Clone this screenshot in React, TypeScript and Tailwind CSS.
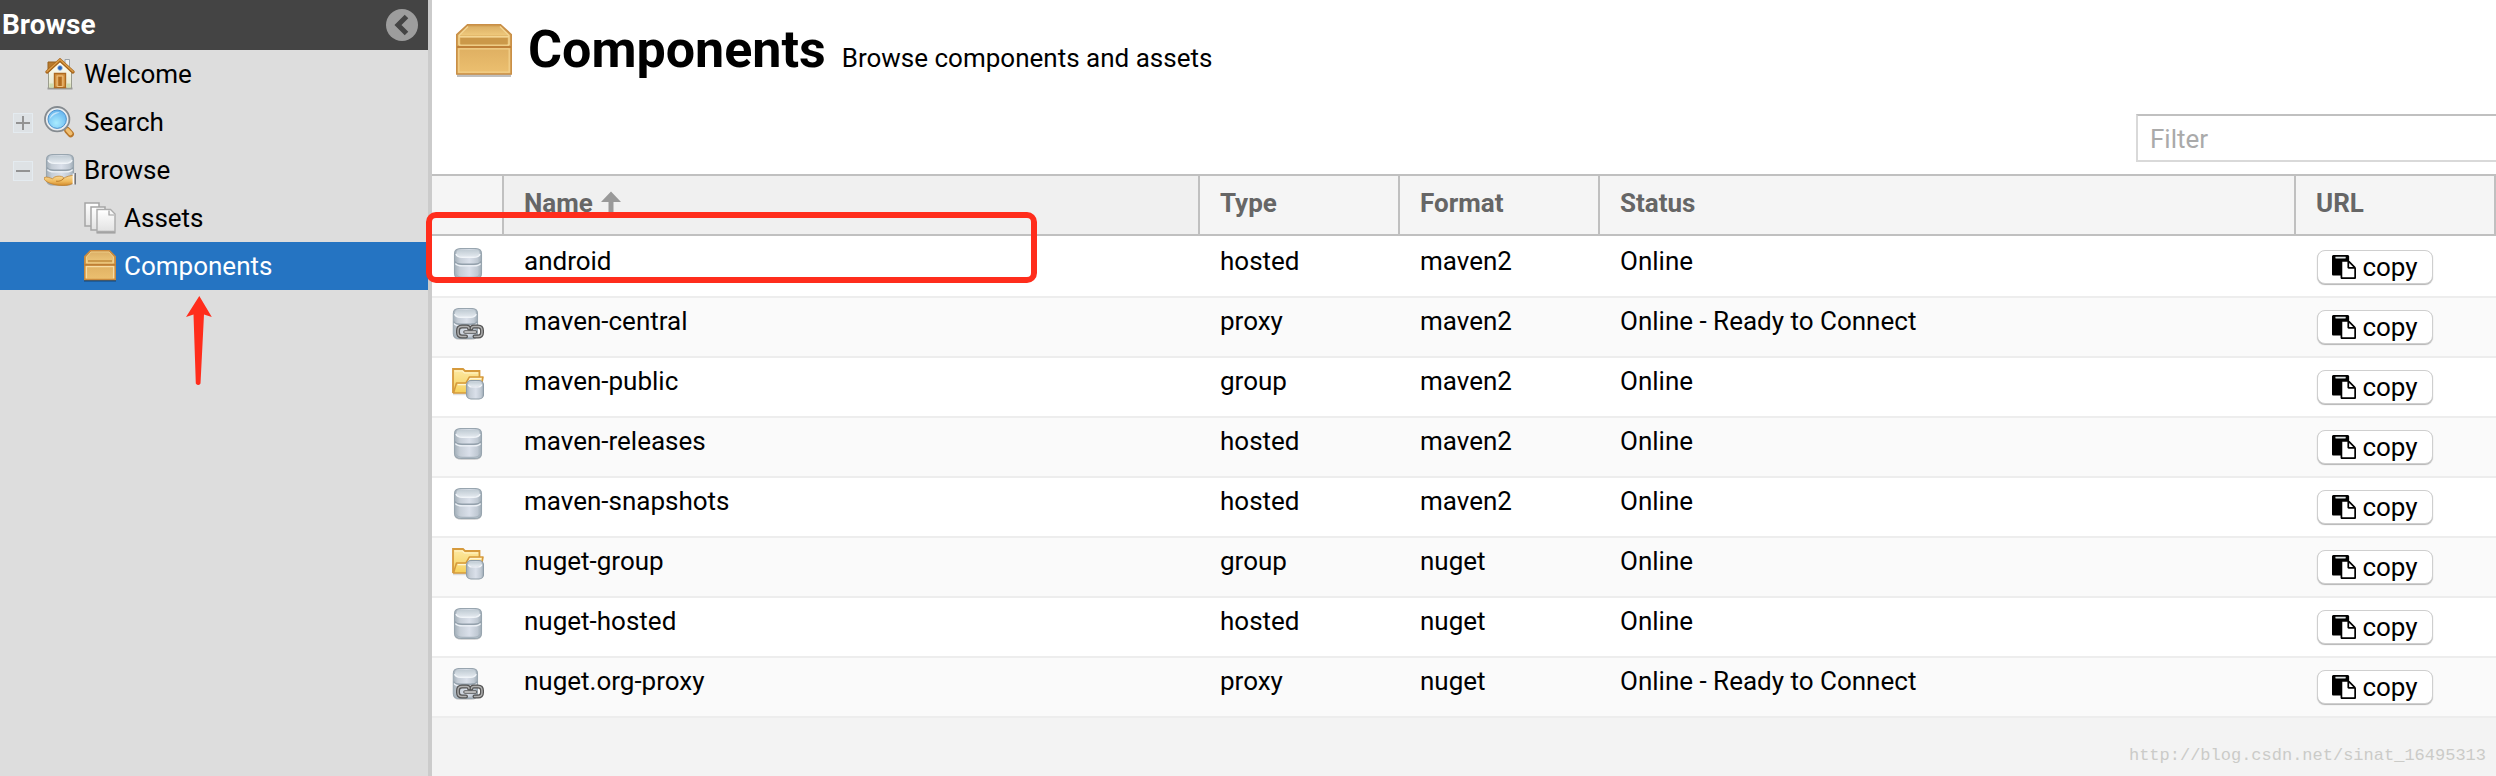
import { ReactNode } from "react";

type RepoType = "hosted" | "proxy" | "group";

interface Repository {
    name: string;
    type: RepoType;
    format: string;
    status: string;
}

const repositories: Repository[] = [
    { name: "android", type: "hosted", format: "maven2", status: "Online" },
    { name: "maven-central", type: "proxy", format: "maven2", status: "Online - Ready to Connect" },
    { name: "maven-public", type: "group", format: "maven2", status: "Online" },
    { name: "maven-releases", type: "hosted", format: "maven2", status: "Online" },
    { name: "maven-snapshots", type: "hosted", format: "maven2", status: "Online" },
    { name: "nuget-group", type: "group", format: "nuget", status: "Online" },
    { name: "nuget-hosted", type: "hosted", format: "nuget", status: "Online" },
    { name: "nuget.org-proxy", type: "proxy", format: "nuget", status: "Online - Ready to Connect" },
];

// Gradients shared by all the icons below
function IconDefs() {
    return (
        <svg className="absolute w-0 h-0" aria-hidden="true">
            <defs>
                <linearGradient id="steel" x1="0" x2="1" y1="0" y2="0">
                    <stop offset="0" stopColor="#a3afb9" />
                    <stop offset="0.2" stopColor="#c6ced7" />
                    <stop offset="0.55" stopColor="#dae0ea" />
                    <stop offset="0.85" stopColor="#c0c9d3" />
                    <stop offset="1" stopColor="#9facb6" />
                </linearGradient>
                <linearGradient id="steelTop" x1="0" x2="0" y1="0" y2="1">
                    <stop offset="0" stopColor="#c0cbd3" />
                    <stop offset="1" stopColor="#e2e8ee" />
                </linearGradient>
                <linearGradient id="lid" x1="0" x2="0" y1="0" y2="1">
                    <stop offset="0" stopColor="#dcb066" />
                    <stop offset="1" stopColor="#efc97c" />
                </linearGradient>
                <linearGradient id="carton" x1="0" x2="0" y1="0" y2="1">
                    <stop offset="0" stopColor="#d3a155" />
                    <stop offset="1" stopColor="#ecc070" />
                </linearGradient>
                <linearGradient id="folder" x1="0" x2="0" y1="0" y2="1">
                    <stop offset="0" stopColor="#fde9a4" />
                    <stop offset="1" stopColor="#f5cf57" />
                </linearGradient>
                <linearGradient id="hand" x1="0" x2="0" y1="0" y2="1">
                    <stop offset="0" stopColor="#f9dc9c" />
                    <stop offset="0.6" stopColor="#efb95c" />
                    <stop offset="1" stopColor="#d18a2c" />
                </linearGradient>
                <linearGradient id="wall" x1="0" x2="0" y1="0" y2="1">
                    <stop offset="0" stopColor="#fffef4" />
                    <stop offset="1" stopColor="#e4e6cd" />
                </linearGradient>
                <linearGradient id="paper" x1="0" x2="0" y1="0" y2="1">
                    <stop offset="0" stopColor="#ffffff" />
                    <stop offset="1" stopColor="#e2e2e2" />
                </linearGradient>
                <radialGradient id="lens" cx="0.45" cy="0.7" r="0.7">
                    <stop offset="0" stopColor="#a9ecff" />
                    <stop offset="1" stopColor="#66b4ee" />
                </radialGradient>
            </defs>
        </svg>
    );
}

function Icon({ children }: { children: ReactNode }) {
    return (
        <svg viewBox="0 0 32 32" className="block w-8 h-8 shrink-0" aria-hidden="true">
            {children}
        </svg>
    );
}

function Cylinder() {
    return (
        <>
            <path d="M2.500 25v2q0 4.800 7 4.800h13q7 0 7-4.800v-2z" fill="#000" opacity="0.2" />
            <path d="M2.500 5.500q0-5 7-5h13q7 0 7 5V25.500q0 5-7 5h-13q-7 0-7-5z" fill="url(#steel)" stroke="#98a5af" strokeWidth="1.100" />
            <path d="M3 13.500q1 2.700 7 2.700h12q6 0 7-2.700" fill="none" stroke="#93a0ab" strokeWidth="1.400" />
            <path d="M3.500 15.500q1 2.400 7 2.400h11q6 0 7-2.400" fill="none" stroke="#eef2f7" strokeWidth="1.400" />
            <rect x="4.500" y="1.800" width="23" height="7" rx="3.500" fill="url(#steelTop)" />
            <path d="M4 6q1 3.300 6.500 3.300h11Q27 9.300 28 6" fill="none" stroke="#f0f4f8" strokeWidth="1.400" />
            <path d="M4 26q1 3.300 6.500 3.300h11q5.500 0 6.500-3.300" fill="none" stroke="#a9b5bf" strokeWidth="1.200" />
        </>
    );
}

function HostedIcon() {
    return (
        <Icon>
            <Cylinder />
        </Icon>
    );
}

function ProxyIcon() {
    return (
        <Icon>
            <g transform="translate(-1 0) scale(0.900 1)">
                <Cylinder />
            </g>
            <g fill="none" strokeLinejoin="round" strokeLinecap="round">
                <path d="M14 28.500H10q-4 0-4-4v-2q0-4 4-4h4.500q2.500 0 2.500 2M22.500 28.500H26q4 0 4-4v-2q0-4-4-4h-4q-2.500 0-2.500 2" stroke="#555" strokeWidth="4" />
                <path d="M14 28.500H10q-4 0-4-4v-2q0-4 4-4h4.500q2.500 0 2.500 2M22.500 28.500H26q4 0 4-4v-2q0-4-4-4h-4q-2.500 0-2.500 2" stroke="#b0b0b0" strokeWidth="1.400" />
                <path d="M13 24h10.500" stroke="#555" strokeWidth="3.600" />
                <path d="M13 24h10.500" stroke="#d8d8d8" strokeWidth="1.600" />
            </g>
        </Icon>
    );
}

function GroupIcon() {
    return (
        <Icon>
            <path d="M1 26V1.500h10l1.500 2H28V9h3v14l-5 3z" fill="#000" opacity="0.12" transform="translate(0 1.200)" />
            <path d="M1 25V1h10l2 2h14.500v6" fill="url(#folder)" stroke="#d69a3c" strokeWidth="1.800" />
            <path d="M2.500 3h8l2 2h13.500" fill="none" stroke="#fff3c8" strokeWidth="1.200" />
            <path d="M4.500 15h9.500l3.500-6h13.500l-3 16H1.500z" fill="url(#folder)" stroke="#d69a3c" strokeWidth="1.600" strokeLinejoin="round" />
            <path d="M5.800 16.600h9l3.400-6h11" fill="none" stroke="#fff6d6" strokeWidth="1.200" />
            <rect x="14.500" y="12.500" width="17" height="18.500" rx="4.500" fill="url(#steel)" stroke="#8f9da8" strokeWidth="1.100" />
            <rect x="16.500" y="13.500" width="13" height="4.500" rx="2.200" fill="url(#steelTop)" />
            <path d="M16 16.500q1 2.500 4 2.500h6q3 0 4-2.500" fill="none" stroke="#f1f4f8" strokeWidth="1.100" />
        </Icon>
    );
}

function HouseIcon() {
    return (
        <Icon>
            <path d="M3.500 29.500h25v2h-25z" fill="#000" opacity="0.3" />
            <path d="M4 4h8v9H4z" fill="#b87a2e" stroke="#96601d" />
            <path d="M21 1.500h4.500V9L21 6z" fill="#eef0f2" stroke="#9aa3a8" />
            <path d="M4.500 14L16 3.500 27.500 14v16h-23z" fill="url(#wall)" stroke="#9b9d8e" />
            <path d="M3 14L16 2l13 12" fill="none" stroke="#a8651a" strokeWidth="3.200" strokeLinecap="round" />
            <path d="M3 13.500L16 1.500l13 12" fill="none" stroke="#dca04c" strokeWidth="1.200" strokeLinecap="round" />
            <circle cx="16" cy="10" r="2.400" fill="#2463b8" stroke="#a9c5ea" strokeWidth="0.800" />
            <path d="M10.500 29.500v-14h11v14z" fill="#d99845" stroke="#ad6a20" strokeWidth="1.400" />
            <path d="M13.200 28.500v-10.500h5.600v10.500z" fill="#c07c2c" stroke="#f0c583" strokeWidth="1" />
            <path d="M16 19v9" stroke="#a8651a" strokeWidth="1.200" />
            <path d="M5.500 25.500h4v4h-4zM22.500 25.500h4v4h-4z" fill="#cfdcae" />
        </Icon>
    );
}

function SearchIcon() {
    return (
        <Icon>
            <path d="M19.500 19.500l4 4" stroke="#7c7c7c" strokeWidth="4" />
            <path d="M23.500 24.500l3.200 3.500" stroke="#b9772a" strokeWidth="6.500" strokeLinecap="round" />
            <path d="M23.500 24l3 3.300" stroke="#f0bf72" strokeWidth="4" strokeLinecap="round" />
            <circle cx="13.200" cy="13.200" r="12.200" fill="#e9edf0" stroke="#858b90" strokeWidth="1.800" />
            <circle cx="13.200" cy="13.200" r="9.200" fill="url(#lens)" stroke="#4e93cd" strokeWidth="1" />
            <path d="M5.800 13c1-5 5-7.500 10-6.500-4 1-7.500 3-10 6.500z" fill="#fff" opacity="0.55" />
        </Icon>
    );
}

function BrowseIcon() {
    return (
        <Icon>
            <Cylinder />
            <path d="M0.300 23.500C3 22.200 6 24 8.500 24.700c2.500-2.700 6-2.900 9-2.300 2 .4 2.500 1.500 1.500 2.300 3-2.200 7-3.200 11.500-3.400v7.900c-4 .5-5 2.300-11.500 2.300C11.500 31.500 4 29.500 0.300 25.500z" fill="url(#hand)" stroke="#bd7c28" strokeWidth="0.700" />
            <path d="M12 27.200c3 .4 5.500-.4 7.500-2.500" fill="none" stroke="#b77422" strokeWidth="0.900" />
            <path d="M28.600 19.500h2V30h-2z" fill="#f7f8fa" />
            <path d="M30.500 19H32v11.500h-1.500z" fill="#70737b" />
        </Icon>
    );
}

function AssetsIcon() {
    return (
        <Icon>
            <path d="M1 1h14v23H1z" fill="url(#paper)" stroke="#a5a5a5" strokeWidth="1.500" />
            <path d="M7 5h14v23H7z" fill="url(#paper)" stroke="#a5a5a5" strokeWidth="1.500" />
            <path d="M12.500 30.800h19" stroke="#9d9d9d" strokeWidth="1.500" />
            <path d="M13 7.500h13.500l4.500 4.500v17.500H13z" fill="url(#paper)" stroke="#ababab" strokeWidth="1.400" />
            <path d="M15 9.500h10" stroke="#fff" strokeWidth="1.500" />
            <path d="M25 8.500v4.500h5" fill="#f5f5f5" stroke="#a0a0a0" strokeWidth="1.200" />
        </Icon>
    );
}

function BoxIcon({ className }: { className: string }) {
    return (
        <svg viewBox="0 0 56 54" className={className} aria-hidden="true">
            <path d="M1 50h54v3H1z" fill="#000" opacity="0.25" />
            <path d="M0.800 50V10.500L11.500 0.800h33L55.200 10.500V50z" fill="url(#carton)" stroke="#c98f47" strokeWidth="1.600" />
            <path d="M3 11.500L12 2.500h32l9 9z" fill="url(#lid)" />
            <path d="M3 21V11.500L12 2.500M53 21V11.500L44 2.500M3 12.800h50M3 21h50" fill="none" stroke="#f4d693" strokeWidth="1.400" />
            <path d="M4.500 14h47v6.500h-47z" fill="#cb9849" />
            <path d="M1 23h54" stroke="#bf8038" strokeWidth="1.800" />
            <path d="M2.800 48.200V24.800h50.400v23.400z" fill="none" stroke="#f2d08c" strokeWidth="1.300" />
        </svg>
    );
}

// The tree uses a chunkier drawing of the box than the page title
function SmallBoxIcon() {
    return (
        <Icon>
            <path d="M0 29.500h32v2H0z" fill="#000" opacity="0.4" />
            <path d="M0.800 29.500V6.500L6.500 0.800h19L31.200 6.500v23z" fill="url(#carton)" stroke="#c98a3e" strokeWidth="1.600" />
            <path d="M2.500 13V7L7 2h18l4.500 5v6z" fill="url(#lid)" stroke="#f4d693" strokeWidth="0.800" />
            <path d="M4 10h24v2.200H4z" fill="#cb9849" />
            <path d="M0.500 14.800h31" stroke="#bf7f35" strokeWidth="1.800" />
            <path d="M2.400 28.200V16.600h27.200v11.600" fill="none" stroke="#f6dca4" strokeWidth="1.300" />
        </Icon>
    );
}

function PasteIcon() {
    return (
        <svg viewBox="0 0 1792 1792" className="w-6 h-6" aria-hidden="true">
            <path d="M256 110h790v170H256z" fill="#dfe5e5" />
            <path d="M768 1664h896v-640h-416q-40 0-68-28t-28-68v-416h-384v1152zm256-1440v-64q0-13-9.500-22.500t-22.500-9.500h-704q-13 0-22.500 9.500t-9.500 22.500v64q0 13 9.500 22.500t22.500 9.500h704q13 0 22.500-9.500t9.500-22.500zm256 672h299l-299-299v299zm512 128v672q0 40-28 68t-68 28h-960q-40 0-68-28t-28-68v-160h-544q-40 0-68-28t-28-68v-1344q0-40 28-68t68-28h1088q40 0 68 28t28 68v328q21 13 36 28l408 408q28 28 48 76t20 88z" />
        </svg>
    );
}

const repoIcons: Record<RepoType, ReactNode> = {
    hosted: <HostedIcon />,
    proxy: <ProxyIcon />,
    group: <GroupIcon />,
};

interface TreeItemProps {
    label: string;
    icon: ReactNode;
    expanded?: boolean;
    child?: boolean;
    selected?: boolean;
}

function TreeItem({ label, icon, expanded, child, selected }: TreeItemProps) {
    return (
        <li className={selected ? "flex h-12 items-center bg-[#2574c2] text-white" : "flex h-12 items-center"}>
            <div className={child ? "w-[84px] shrink-0" : "w-11 shrink-0 pl-[13px]"}>
                {expanded !== undefined && (
                    <button
                        aria-label={expanded ? "Collapse" : "Expand"}
                        className="mt-0.5 flex w-5 h-5 items-center justify-center border border-[#e4ebf0] bg-[#dee2e5]"
                    >
                        <svg viewBox="0 0 14 14" className="w-3.5 h-3.5" aria-hidden="true">
                            <path d={expanded ? "M0 7h14" : "M0 7h14M7 0v14"} stroke="#939393" strokeWidth="2" />
                        </svg>
                    </button>
                )}
            </div>
            <a href="#" className="flex items-center gap-2 leading-[30px]">
                {icon}
                {label}
            </a>
        </li>
    );
}

function Sidebar() {
    return (
        <aside className="w-[432px] shrink-0 border-r-4 border-[#cbcbcb] bg-[#dddddd]">
            <div className="flex h-[50px] items-center justify-between bg-[#444444] pl-0.5 pr-2.5 text-white">
                <h2 className="text-[28px] font-bold leading-8">Browse</h2>
                <button aria-label="Collapse panel">
                    <svg viewBox="0 0 32 32" className="block w-8 h-8" aria-hidden="true">
                        <circle cx="16" cy="16" r="16" fill="#9d9d9d" />
                        <path d="M20.500 7.500L12 16l8.500 8.500" fill="none" stroke="#444" strokeWidth="5" />
                    </svg>
                </button>
            </div>
            <nav>
                <ul>
                    <TreeItem label="Welcome" icon={<HouseIcon />} />
                    <TreeItem label="Search" icon={<SearchIcon />} expanded={false} />
                    <TreeItem label="Browse" icon={<BrowseIcon />} expanded />
                    <TreeItem label="Assets" icon={<AssetsIcon />} child />
                    <TreeItem label="Components" icon={<SmallBoxIcon />} child selected />
                </ul>
            </nav>
        </aside>
    );
}

function HeaderCell({ children, sorted }: { children?: ReactNode; sorted?: boolean }) {
    return (
        <th
            className={
                sorted
                    ? "h-[62px] border-y-2 border-r-2 border-[#c0c0c0] bg-[#f0f0f0] px-5 pt-[11px] text-left align-top"
                    : "h-[62px] border-y-2 border-r-2 border-[#c0c0c0] bg-[#f5f5f5] px-5 pt-[11px] text-left align-top"
            }
        >
            {children}
        </th>
    );
}

function RepositoryTable() {
    return (
        <table className="w-full table-fixed border-separate border-spacing-0 leading-8">
            <colgroup>
                <col className="w-[72px]" />
                <col />
                <col className="w-[200px]" />
                <col className="w-[200px]" />
                <col />
                <col className="w-[200px]" />
            </colgroup>
            <thead className="text-[#666666]">
                <tr>
                    <HeaderCell />
                    <HeaderCell sorted>
                        <button className="flex items-center gap-2 font-bold">
                            Name
                            <svg viewBox="0 0 20 24" className="w-5 h-6" aria-hidden="true">
                                <path d="M10 0.500l10 10.500h-7.500v13h-5V11H0z" fill="#999" />
                            </svg>
                        </button>
                    </HeaderCell>
                    <HeaderCell>Type</HeaderCell>
                    <HeaderCell>Format</HeaderCell>
                    <HeaderCell>Status</HeaderCell>
                    <HeaderCell>URL</HeaderCell>
                </tr>
            </thead>
            <tbody className="[&_td]:h-[60px] [&_td]:border-b-2 [&_td]:border-[#ededed] [&_td]:pl-5 [&_td]:pt-[7px] [&_td]:align-top">
                {repositories.map((repo) => (
                    <tr key={repo.name} className="bg-white even:bg-[#fafafa] first:[&_td]:h-[62px] first:[&_td]:pt-[9px]">
                        <td>
                            <div className="pt-[3px]">{repoIcons[repo.type]}</div>
                        </td>
                        <td>{repo.name}</td>
                        <td>{repo.type}</td>
                        <td>{repo.format}</td>
                        <td>{repo.status}</td>
                        <td>
                            <button className="mt-[5px] ml-px flex h-[34px] w-[116px] items-center justify-center gap-1.5 rounded-lg border border-[#cfcfcf] bg-white shadow-[0_1px_1px_#b5b5b5]">
                                <PasteIcon />
                                copy
                            </button>
                        </td>
                    </tr>
                ))}
            </tbody>
        </table>
    );
}

export default function App() {
    return (
        <div className="relative flex min-h-screen overflow-hidden bg-[#f3f3f3] font-[Roboto,sans-serif] text-[26px] text-black">
            <IconDefs />
            <Sidebar />

            <main className="min-w-0 flex-1">
                <header className="bg-white pb-3">
                    <div className="flex h-[114px] items-start gap-4 pl-6 pt-[22px]">
                        <BoxIcon className="mt-0.5 block w-[56px] h-[54px] shrink-0" />
                        <div className="flex items-baseline gap-4">
                            <h1 className="text-[52px] font-bold leading-[56px]">Components</h1>
                            <p>Browse components and assets</p>
                        </div>
                    </div>
                    <input
                        type="text"
                        aria-label="Filter"
                        placeholder="Filter"
                        className="ml-auto block h-12 w-[360px] border-2 border-r-0 border-[#d9d9d9] border-t-[#c0c0c0] bg-white px-3 pt-0.5 outline-none placeholder:text-[#aaaaaa]"
                    />
                </header>
                <RepositoryTable />
            </main>

            {/* Annotations drawn over the page */}
            <div className="pointer-events-none absolute left-[426px] top-[212px] h-[71px] w-[611px] rounded-[10px] border-[6px] border-[#ff2d1c]" />
            <svg viewBox="0 0 26 90" className="pointer-events-none absolute left-[186px] top-[296px] h-[90px] w-[26px]" aria-hidden="true">
                <path d="M13.300 0L25.800 21l-7.800-2.500-3.500 69q-2.200 3-4.700 0L7.500 18.500 0 21z" fill="#ff2d1c" />
            </svg>
            <p className="absolute bottom-2 right-2.5 font-['Liberation_Mono',monospace] text-[17px] text-[#cbcbc8]">
                http://blog.csdn.net/sinat_16495313
            </p>
        </div>
    );
}
